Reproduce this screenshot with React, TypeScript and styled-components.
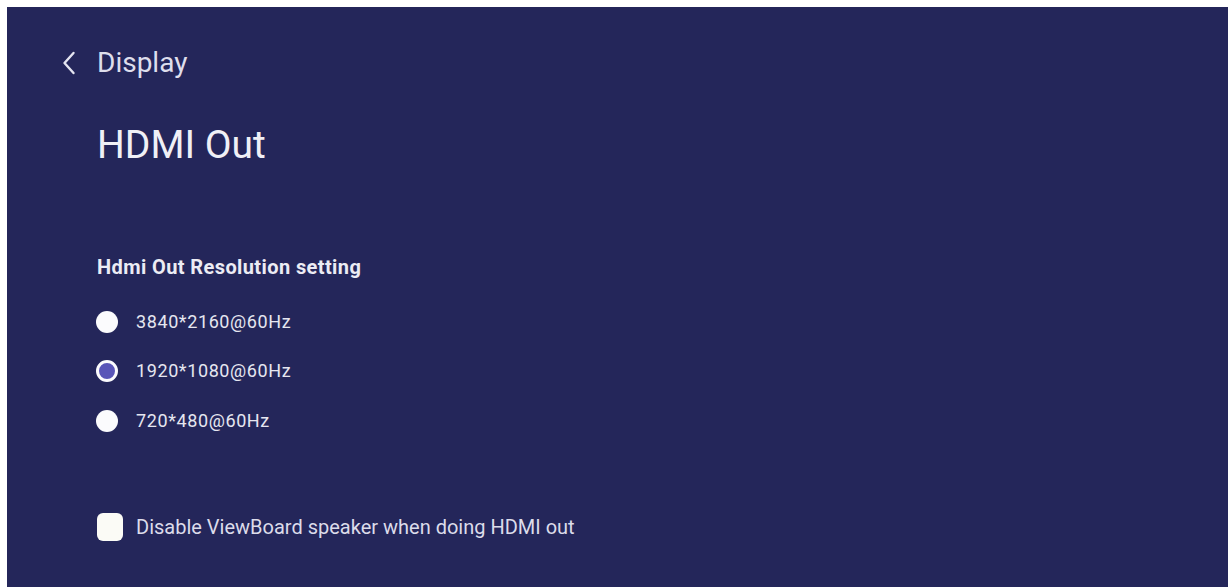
import React, { useState } from "react";
import styled, { createGlobalStyle } from "styled-components";

const Global = createGlobalStyle`
  html, body { margin: 0; padding: 0; background: #ffffff; }
  body { font-family: Roboto, "Noto Sans", "Liberation Sans", sans-serif; }
  * { box-sizing: border-box; }
`;

const Page = styled.div`
  padding: 7px 0 0 7px;
  width: 1228px;
  height: 587px;
  overflow: hidden;
`;

const Panel = styled.main`
  background: #24265a;
  height: 580px;
  display: flex;
  flex-direction: column;
  padding: 41px 0 0 90px;
  color: #ececf4;
`;

const Header = styled.div`
  display: flex;
  align-items: center;
  height: 30px;
  margin-left: -35px;
`;

const Back = styled.button`
  width: 35px;
  height: 30px;
  padding: 0;
  border: none;
  background: none;
  display: flex;
  align-items: center;
  color: #e4e4f0;
  cursor: pointer;
`;

const Crumb = styled.span`
  font-size: 28px;
  line-height: 30px;
  color: #dedeec;
`;

const Title = styled.h1`
  margin: 45px 0 0 0;
  font-size: 39px;
  line-height: 44px;
  font-weight: 400;
  color: #f0f0f6;
`;

const SectionLabel = styled.h2`
  margin: 88px 0 0 0;
  font-size: 20px;
  line-height: 24px;
  font-weight: 700;
  color: #ececf4;
  letter-spacing: 0.4px;
`;

const RadioList = styled.div`
  display: flex;
  flex-direction: column;
  margin-top: 18px;
`;

const Row = styled.label`
  display: flex;
  align-items: center;
  height: 49.5px;
  gap: 18px;
  cursor: pointer;
`;

const RadioDot = styled.span<{ $checked: boolean }>`
  width: 22px;
  height: 22px;
  border-radius: 50%;
  flex: none;
  margin-left: -1px;
  background: ${(p) => (p.$checked ? "#5955b8" : "#fbfbfd")};
  border: ${(p) => (p.$checked ? "3.5px solid #fbfbfd" : "none")};
`;

const OptionText = styled.span`
  font-size: 18px;
  line-height: 24px;
  color: #e6e6f0;
  letter-spacing: 0.6px;
`;

const CheckRow = styled.label`
  display: flex;
  align-items: center;
  height: 40px;
  margin-top: 61px;
  gap: 13px;
  cursor: pointer;
`;

const CheckBox = styled.span<{ $checked: boolean }>`
  width: 26px;
  height: 28px;
  border-radius: 6px;
  background: #fbfbf6;
  flex: none;
  display: flex;
  align-items: center;
  justify-content: center;
  color: #5955b8;
`;

const CheckText = styled.span`
  font-size: 20px;
  line-height: 24px;
  color: #dcdcea;
`;

const options = ["3840*2160@60Hz", "1920*1080@60Hz", "720*480@60Hz"];

export default function App() {
  const [selected, setSelected] = useState(1);
  const [disabled, setDisabled] = useState(false);
  return (
    <>
      <Global />
      <Page>
        <Panel>
          <Header>
            <Back aria-label="Back">
              <svg width="14" height="24" viewBox="0 0 14 24" fill="none">
                <path d="M11.5 2 L2.5 12 L11.5 22" stroke="currentColor" strokeWidth="2.4" strokeLinecap="round" strokeLinejoin="round" />
              </svg>
            </Back>
            <Crumb>Display</Crumb>
          </Header>
          <Title>HDMI Out</Title>
          <SectionLabel>Hdmi Out Resolution setting</SectionLabel>
          <RadioList>
            {options.map((o, i) => (
              <Row key={o} onClick={() => setSelected(i)}>
                <RadioDot $checked={selected === i} />
                <OptionText>{o}</OptionText>
              </Row>
            ))}
          </RadioList>
          <CheckRow onClick={() => setDisabled(!disabled)}>
            <CheckBox $checked={disabled}>
              {disabled && (
                <svg width="16" height="16" viewBox="0 0 16 16" fill="none">
                  <path d="M3 8.5 L6.5 12 L13 4.5" stroke="currentColor" strokeWidth="2.2" />
                </svg>
              )}
            </CheckBox>
            <CheckText>Disable ViewBoard speaker when doing HDMI out</CheckText>
          </CheckRow>
        </Panel>
      </Page>
    </>
  );
}
